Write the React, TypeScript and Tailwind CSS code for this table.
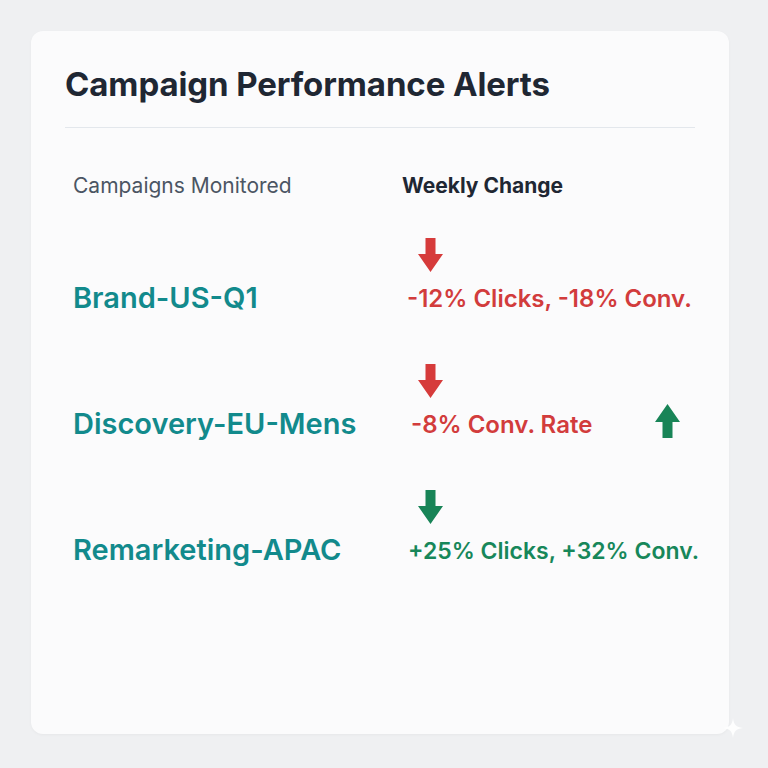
import React from 'react';

type Tone = 'down' | 'up';

const Arrow: React.FC<{ color: string; dir: 'down' | 'up' }> = ({ color, dir }) => (
    <svg width="25" height="34" viewBox="0 0 25 34" className={dir === 'up' ? 'rotate-180' : ''}>
        <polygon points="7.5,0 17.5,0 17.5,16 25,16 12.5,34 0,16 7.5,16" fill={color} />
    </svg>
);

export default function App() {
    const rows: { name: string; change: string; tone: Tone; arrowColor: string; textClass: string; extraUp?: boolean }[] = [
        { name: 'Brand-US-Q1', change: '-12% Clicks, -18% Conv.', tone: 'down', arrowColor: '#d63b3b', textClass: 'ml-[5px] text-[24px]' },
        { name: 'Discovery-EU-Mens', change: '-8% Conv. Rate', tone: 'down', arrowColor: '#d63b3b', textClass: 'ml-[9px] text-[24px]', extraUp: true },
        { name: 'Remarketing-APAC', change: '+25% Clicks, +32% Conv.', tone: 'up', arrowColor: '#188457', textClass: 'ml-[6px] text-[23px]' },
    ];

    return (
        <div className="w-[768px] h-[768px] bg-[#eff0f2] p-[31px] font-['Inter','Liberation_Sans',sans-serif]">
            <div className="relative w-[698px] h-[703px] bg-[#fbfbfc] rounded-[12px] shadow-[0_1px_3px_rgba(0,0,0,0.04)] px-[34px] pt-[33px]">

                {/* Header */}
                <h1 className="text-[33px] leading-[40px] font-bold text-[#1f2733] tracking-[-0.1px]">Campaign Performance Alerts</h1>
                <div className="mt-[23px] h-px bg-[#e3e7ec]" />

                <div className="grid grid-cols-[329px_1fr] pl-[8px] mt-[45px] text-[21px] leading-[26px]">
                    <div className="text-[#4b5563]">Campaigns Monitored</div>
                    <div className="font-bold text-[#1f2733]">Weekly Change</div>
                </div>

                {/* Rows */}
                <div className="flex flex-col gap-[50px] mt-[39px] pl-[8px]">
                    {rows.map((row, i) => (
                        <div key={i} className="grid grid-cols-[329px_1fr] items-end">
                            <div className="text-[29px] leading-[34px] font-semibold text-[#128a8c] mb-[-1px] whitespace-nowrap">{row.name}</div>
                            <div className="flex flex-col">
                                <div className="ml-[16px] mb-[12px]">
                                    <Arrow color={row.arrowColor} dir="down" />
                                </div>
                                <div className="flex items-center h-[30px] pr-[15px]">
                                    <span
                                        className={`${row.textClass} leading-[30px] font-semibold whitespace-nowrap ${row.tone === 'down' ? 'text-[#d23c3c]' : 'text-[#17875a]'}`}
                                    >
                                        {row.change}
                                    </span>
                                    {row.extraUp && (
                                        <div className="ml-auto -mt-[8px]">
                                            <Arrow color="#188457" dir="up" />
                                        </div>
                                    )}
                                </div>
                            </div>
                        </div>
                    ))}
                </div>

                {/* corner sparkle */}
                <svg className="absolute right-[-14px] bottom-[-4px]" width="20" height="20" viewBox="0 0 20 20">
                    <path d="M10 0 C11 7 13 9 20 10 C13 11 11 13 10 20 C9 13 7 11 0 10 C7 9 9 7 10 0 Z" fill="#ffffff" opacity="0.9" />
                </svg>
            </div>
        </div>
    );
}
